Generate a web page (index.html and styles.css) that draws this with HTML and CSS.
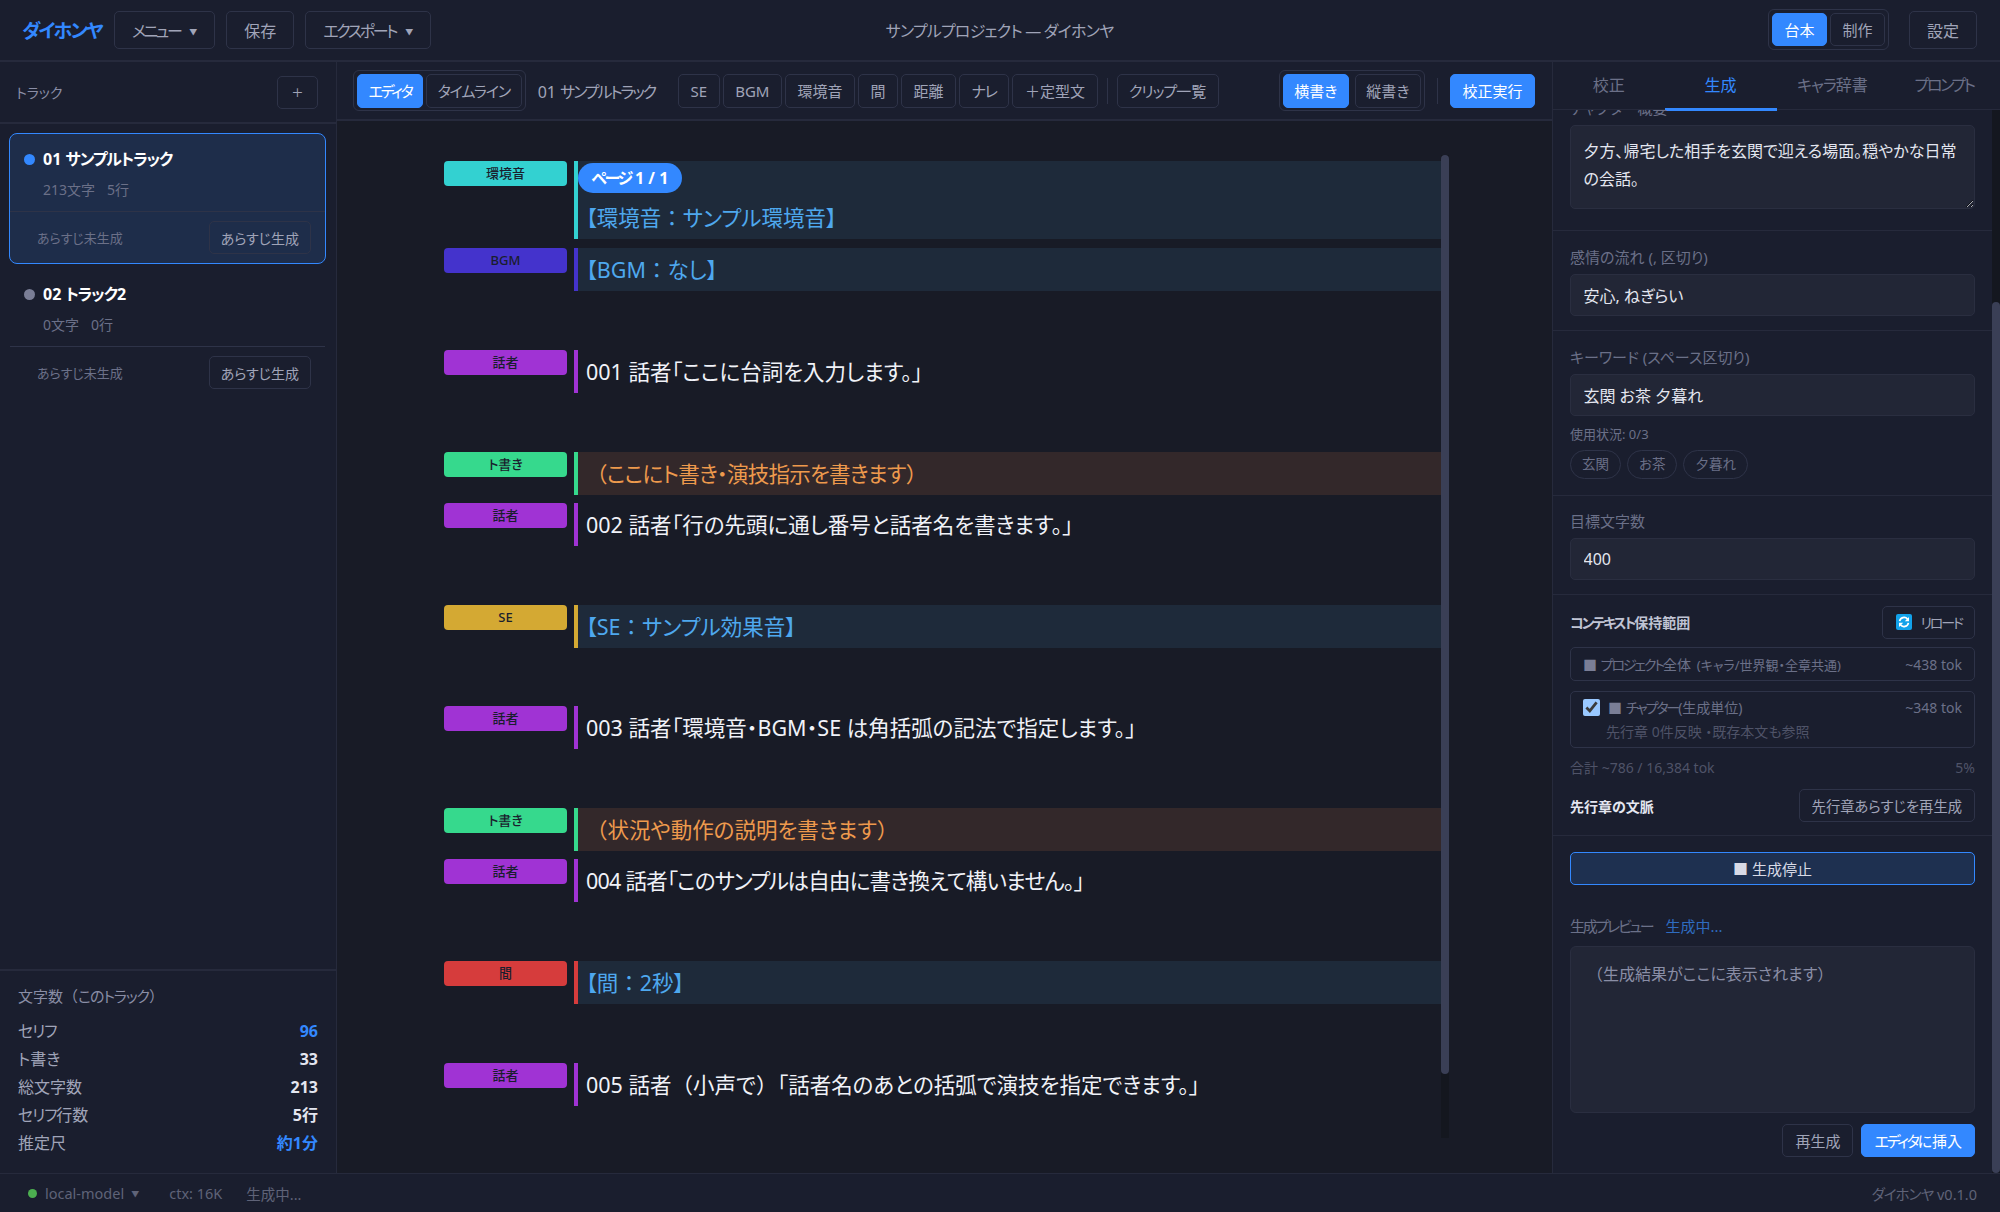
FILE: index.html
```html
<!DOCTYPE html>
<html lang="ja">
<head>
    <meta charset="UTF-8">
    <title>サンプルプロジェクト — ダイホンヤ</title>
    <link rel="stylesheet" href="styles.css">
</head>
<body>
    <div class="app">
        <header class="topbar">
            <div class="topbar-left">
                <span class="logo">ダイホンヤ</span>
                <button class="btn btn-top"><span class="kn">メニュー</span><span class="caret">▼</span></button>
                <button class="btn btn-top">保存</button>
                <button class="btn btn-top"><span class="kn">エクスポート</span><span class="caret">▼</span></button>
            </div>
            <div class="topbar-title">サンプルプロジェクト — ダイホンヤ</div>
            <div class="topbar-right">
                <div class="seg seg-top">
                    <button class="seg-btn active">台本</button>
                    <button class="seg-btn">制作</button>
                </div>
                <button class="btn btn-top">設定</button>
            </div>
        </header>

        <div class="main">
            <!-- トラック一覧 -->
            <aside class="sidebar">
                <div class="side-head">
                    <span>トラック</span>
                    <button class="btn btn-add">+</button>
                </div>
                <div class="tracks">
                    <div class="track selected">
                        <div class="track-title"><span class="dot dot-blue"></span><span>01 <span class="kn-s">サンプルトラック</span></span></div>
                        <div class="track-sub"><span>213文字</span><span>5行</span></div>
                        <div class="track-foot">
                            <span>あらすじ未生成</span>
                            <button class="btn btn-small">あらすじ生成</button>
                        </div>
                    </div>
                    <div class="track">
                        <div class="track-title"><span class="dot dot-gray"></span><span>02 <span class="kn-s">トラック</span>2</span></div>
                        <div class="track-sub"><span>0文字</span><span>0行</span></div>
                        <div class="track-foot">
                            <span>あらすじ未生成</span>
                            <button class="btn btn-small">あらすじ生成</button>
                        </div>
                    </div>
                </div>
                <div class="stats">
                    <div class="stats-title">文字数<span class="zen">（</span><span class="kn-s">このトラック</span><span class="zen">）</span></div>
                    <div class="stat"><span class="kn-s">セリフ</span><b class="blue">96</b></div>
                    <div class="stat"><span>ト書き</span><b>33</b></div>
                    <div class="stat"><span>総文字数</span><b>213</b></div>
                    <div class="stat"><span><span class="kn-s">セリフ</span>行数</span><b>5行</b></div>
                    <div class="stat"><span>推定尺</span><b class="blue">約1分</b></div>
                </div>
            </aside>

            <!-- エディタ -->
            <section class="center">
                <div class="toolbar">
                    <div class="seg">
                        <button class="seg-btn active"><span class="kn">エディタ</span></button>
                        <button class="seg-btn"><span class="kn-s">タイムライン</span></button>
                    </div>
                    <span class="track-name">01 <span class="kn-m">サンプルトラック</span></span>
                    <div class="tool-group">
                        <button class="btn btn-tool">SE</button>
                        <button class="btn btn-tool">BGM</button>
                        <button class="btn btn-tool">環境音</button>
                        <button class="btn btn-tool">間</button>
                        <button class="btn btn-tool">距離</button>
                        <button class="btn btn-tool"><span class="kn-s">ナレ</span></button>
                        <button class="btn btn-tool"><span class="zen">＋</span>定型文</button>
                    </div>
                    <span class="sep"></span>
                    <button class="btn btn-tool"><span class="kn-s">クリップ</span>一覧</button>
                    <div class="spacer"></div>
                    <div class="seg seg-wide">
                        <button class="seg-btn active">横書き</button>
                        <button class="seg-btn">縦書き</button>
                    </div>
                    <span class="sep sep-wide"></span>
                    <button class="btn btn-tool btn-primary">校正実行</button>
                </div>

                <div class="editor">
                    <div class="sheet">
                        <div class="rows">
                            <div class="row row-first">
                                <span class="tag tag-ambient">環境音</span>
                                <div class="line line-cue bar-ambient">
                                    <span class="page-badge"><span class="kn">ページ</span> 1 / 1</span>
                                    <span>【環境音<span class="zen">：</span>サンプル環境音】</span>
                                </div>
                            </div>
                            <div class="row">
                                <span class="tag tag-bgm">BGM</span>
                                <div class="line line-cue bar-bgm"><span>【BGM<span class="zen">：</span>なし】</span></div>
                            </div>
                            <div class="row"></div>
                            <div class="row">
                                <span class="tag tag-speaker">話者</span>
                                <div class="line bar-speaker">001 話者「ここに台詞を入力します。」</div>
                            </div>
                            <div class="row"></div>
                            <div class="row">
                                <span class="tag tag-note">ト書き</span>
                                <div class="line line-note bar-note"><span class="tight"><span class="zen">（</span>ここにト書き・演技指示を書きます<span class="zen">）</span></span></div>
                            </div>
                            <div class="row">
                                <span class="tag tag-speaker">話者</span>
                                <div class="line bar-speaker">002 話者「行の先頭に通し番号と話者名を書きます。」</div>
                            </div>
                            <div class="row"></div>
                            <div class="row">
                                <span class="tag tag-se">SE</span>
                                <div class="line line-cue bar-se"><span>【SE<span class="zen">：</span>サンプル効果音】</span></div>
                            </div>
                            <div class="row"></div>
                            <div class="row">
                                <span class="tag tag-speaker">話者</span>
                                <div class="line bar-speaker">003 話者「環境音・BGM・SE は角括弧の記法で指定します。」</div>
                            </div>
                            <div class="row"></div>
                            <div class="row">
                                <span class="tag tag-note">ト書き</span>
                                <div class="line line-note bar-note"><span><span class="zen">（</span>状況や動作の説明を書きます<span class="zen">）</span></span></div>
                            </div>
                            <div class="row">
                                <span class="tag tag-speaker">話者</span>
                                <div class="line bar-speaker"><span class="tight">004 話者「この<span class="kn-s">サンプル</span>は自由に書き換えて構いません。」</span></div>
                            </div>
                            <div class="row"></div>
                            <div class="row">
                                <span class="tag tag-pause">間</span>
                                <div class="line line-cue bar-pause"><span>【間<span class="zen">：</span>2秒】</span></div>
                            </div>
                            <div class="row"></div>
                            <div class="row">
                                <span class="tag tag-speaker">話者</span>
                                <div class="line bar-speaker"><span>005 話者<span class="zen">（</span>小声で<span class="zen">）</span>「話者名のあとの括弧で演技を指定できます。」</span></div>
                            </div>
                        </div>
                        <div class="vbar vbar-editor"><div class="vbar-thumb"></div></div>
                    </div>
                </div>
            </section>

            <!-- 右パネル -->
            <aside class="panel">
                <nav class="tabs">
                    <span class="tab">校正</span>
                    <span class="tab active">生成</span>
                    <span class="tab"><span class="kn-s">キャラ</span>辞書</span>
                    <span class="tab"><span class="kn">プロンプト</span></span>
                </nav>
                <div class="panel-body">
                    <div class="panel-scroll">
                        <div class="section section-first">
                            <label class="field-label">チャプター概要</label>
                            <textarea class="field field-area" rows="2">夕方、帰宅した相手を玄関で迎える場面。穏やかな日常の会話。</textarea>
                        </div>
                        <div class="section section-emotion">
                            <label class="field-label">感情の流れ (, 区切り)</label>
                            <input class="field" type="text" value="安心, ねぎらい">
                        </div>
                        <div class="section section-keywords">
                            <label class="field-label">キーワード (スペース区切り)</label>
                            <input class="field" type="text" value="玄関 お茶 夕暮れ">
                            <div class="usage">使用状況: 0/3</div>
                            <div class="chips">
                                <span class="chip">玄関</span>
                                <span class="chip">お茶</span>
                                <span class="chip">夕暮れ</span>
                            </div>
                        </div>
                        <div class="section section-target">
                            <label class="field-label">目標文字数</label>
                            <input class="field" type="text" value="400">
                        </div>
                        <div class="section section-context">
                            <div class="context-head">
                                <span class="bold-label"><span class="kn">コンテキスト</span>保持範囲</span>
                                <button class="btn btn-reload">
                                    <svg class="reload-icon" width="16" height="16" viewBox="0 0 16 16">
                                        <rect width="16" height="16" rx="2" fill="#12a2ea"/>
                                        <path d="M3.6 7.2A4.5 4.5 0 0 1 11.6 5.2" fill="none" stroke="#fff" stroke-width="1.7"/>
                                        <path d="M13 3v4.2H8.8z" fill="#fff"/>
                                        <path d="M12.4 8.8A4.5 4.5 0 0 1 4.4 10.8" fill="none" stroke="#fff" stroke-width="1.7"/>
                                        <path d="M3 13V8.8h4.2z" fill="#fff"/>
                                    </svg>
                                    <span class="kn">リロード</span>
                                </button>
                            </div>
                            <div class="ctx-box">
                                <span class="ctx-name"><i class="square">■</i> <span class="kn">プロジェクト</span>全体 <small>(キャラ/世界観・全章共通)</small></span>
                                <span class="ctx-tok">~438 tok</span>
                            </div>
                            <div class="ctx-box ctx-box-check">
                                <input class="ctx-check" type="checkbox" checked>
                                <div class="ctx-main">
                                    <div class="ctx-row">
                                        <span class="ctx-name"><i class="square">■</i> <span class="kn">チャプター</span>(生成単位)</span>
                                        <span class="ctx-tok">~348 tok</span>
                                    </div>
                                    <div class="ctx-note">先行章 0件反映 ・既存本文も参照</div>
                                </div>
                            </div>
                            <div class="ctx-total">
                                <span>合計 ~786 / 16,384 tok</span>
                                <span>5%</span>
                            </div>
                            <div class="context-head context-prev">
                                <span class="bold-label bright">先行章の文脈</span>
                                <button class="btn btn-small">先行章あらすじを再生成</button>
                            </div>
                        </div>
                        <div class="section section-generate">
                            <button class="btn-stop">■ 生成停止</button>
                            <div class="preview-label"><span class="kn">生成プレビュー</span><span class="generating">生成中...</span></div>
                            <div class="preview"><span class="zen">（</span>生成結果がここに表示されます<span class="zen">）</span></div>
                            <div class="preview-actions">
                                <button class="btn btn-action">再生成</button>
                                <button class="btn btn-action btn-primary"><span class="kn">エディタ</span>に挿入</button>
                            </div>
                        </div>
                    </div>
                    <div class="vbar vbar-panel"><div class="vbar-thumb"></div></div>
                </div>
            </aside>
        </div>

        <footer class="statusbar">
            <div class="status-left">
                <span class="status-model"><span class="dot dot-green"></span>local-model<span class="caret">▼</span></span>
                <span>ctx: 16K</span>
                <span>生成中...</span>
            </div>
            <span><span class="kn-s">ダイホンヤ</span> v0.1.0</span>
        </footer>
    </div>
</body>
</html>
```

FILE: styles.css
```css
* {
    box-sizing: border-box;
}

html, body {
    margin: 0;
    height: 100%;
    overflow: hidden;
}

body {
    background-color: #1a1e2e;
    color: #e4e6f0;
    font-family: "Noto Sans", "Noto Sans CJK JP", sans-serif;
    font-feature-settings: "palt";
    font-size: 14px;
}

button, input, textarea {
    font: inherit;
    font-feature-settings: inherit;
}

/* カタカナの詰め */
.kn {
    letter-spacing: -0.15em;
}

.kn-m {
    letter-spacing: -0.13em;
}

.kn-s {
    letter-spacing: -0.07em;
}

.tight {
    letter-spacing: -0.035em;
}

/* 全角のまま見せる記号 */
.zen {
    font-feature-settings: normal;
}

.app {
    display: flex;
    flex-direction: column;
    height: 1212px;
}

/* 共通ボタン */
.btn {
    background-color: transparent;
    border: 1.5px solid #2e3348;
    border-radius: 5px;
    color: #a0a4b8;
    cursor: pointer;
    padding: 0;
}

.btn-primary {
    background-color: #3388ff;
    border-color: #3388ff;
    color: #fff;
}

.caret {
    font-size: 8px;
    margin-left: 9px;
    vertical-align: 2px;
}

/* 上部バー */
.topbar {
    display: grid;
    grid-template-columns: 1fr auto 1fr;
    align-items: center;
    height: 62px;
    flex-shrink: 0;
    padding: 0 23px 1px 22px;
    border-bottom: 2px solid #262a3c;
}

.topbar-left {
    display: flex;
    align-items: center;
    gap: 11px;
}

.logo {
    color: #3388ff;
    font-size: 19px;
    font-weight: 700;
    letter-spacing: -2px;
    margin-right: 1px;
}

.btn-top {
    height: 38px;
    padding: 0 17px;
    font-size: 16px;
}

.topbar-title {
    color: #a0a4b8;
    font-size: 16px;
    letter-spacing: -0.05em;
}

.topbar-right {
    display: flex;
    align-items: center;
    justify-content: flex-end;
    gap: 20px;
}

.seg {
    display: flex;
    gap: 3px;
    padding: 2.5px 3px;
    border: 1.5px solid #2e3348;
    border-radius: 6px;
}

.seg-wide {
    gap: 6px;
}

.seg-btn {
    height: 34px;
    padding: 0 10.5px;
    background-color: transparent;
    border: 1.5px solid #2e3348;
    border-radius: 5px;
    color: #a0a4b8;
    font-size: 15px;
}

.seg-btn.active {
    background-color: #3388ff;
    border-color: #3388ff;
    color: #fff;
}

.seg-top {
    padding: 3px;
}

.seg-top .seg-btn {
    height: 33px;
    padding: 0 11.5px;
    font-size: 15px;
}

.main {
    display: flex;
    flex: 1;
    min-height: 0;
}

/* 左サイドバー */
.sidebar {
    display: flex;
    flex-direction: column;
    width: 337px;
    flex-shrink: 0;
    border-right: 1.5px solid #262a3c;
}

.side-head {
    display: flex;
    align-items: center;
    justify-content: space-between;
    height: 62px;
    padding: 0 18px 0 16px;
    border-bottom: 2px solid #262a3c;
    color: #8a8ea6;
    font-size: 14px;
}

.btn-add {
    width: 41px;
    height: 33px;
    font-size: 19px;
    font-weight: 300;
}

.tracks {
    flex: 1;
    padding: 9px 10px 0 9px;
}

.track {
    border: 1.5px solid transparent;
    border-radius: 8px;
    margin-bottom: 4px;
}

.track.selected {
    background-color: #1e2d4a;
    border-color: #3388ff;
}

.track-title {
    display: flex;
    align-items: center;
    gap: 8px;
    padding: 13px 0 0 14px;
    color: #fff;
    font-size: 16px;
    font-weight: 700;
    line-height: 24px;
}

.dot {
    display: inline-block;
    width: 11px;
    height: 11px;
    border-radius: 50%;
}

.dot-blue {
    background-color: #3388ff;
}

.dot-gray {
    background-color: #7a7e96;
}

.dot-green {
    width: 9px;
    height: 9px;
    background-color: #4caf50;
    margin-right: 8px;
}

.track-sub {
    display: flex;
    gap: 12px;
    padding: 8px 0 0 33px;
    color: #6b7088;
    font-size: 14px;
    line-height: 22px;
}

.track-foot {
    display: flex;
    align-items: center;
    justify-content: space-between;
    height: 52px;
    margin-top: 10px;
    padding: 0 14px 0 27px;
    border-top: 1.5px solid #2e3348;
    color: #6b7088;
    font-size: 13px;
}

.btn-small {
    height: 33px;
    padding: 0 11px;
    font-size: 14px;
}

.btn-action {
    height: 33px;
    padding: 0 12px;
    font-size: 15px;
}

.stats {
    height: 204px;
    padding: 14px 18px 0;
    border-top: 2px solid #262a3c;
    color: #a0a4b8;
}

.stats-title {
    color: #8a8ea6;
    font-size: 15px;
    line-height: 22px;
    margin-bottom: 10px;
}

.stat {
    display: flex;
    justify-content: space-between;
    font-size: 16px;
    line-height: 28px;
}

.stat b {
    color: #e4e6f0;
    font-weight: 700;
}

.stat b.blue {
    color: #3388ff;
}

/* 中央エディタ */
.center {
    display: flex;
    flex-direction: column;
    flex: 1;
    min-width: 0;
    background-color: #181b26;
}

.toolbar {
    display: flex;
    align-items: center;
    height: 59px;
    flex-shrink: 0;
    padding: 0 17px 0 16px;
    background-color: #1a1e2e;
    border-bottom: 2px solid #262a3c;
}

.track-name {
    margin: 0 23px 0 12px;
    color: #a0a4b8;
    font-size: 16px;
}

.tool-group {
    display: flex;
    gap: 3px;
}

.btn-tool {
    height: 34px;
    padding: 0 11.5px;
    font-size: 15px;
}

.sep {
    width: 1px;
    height: 26px;
    margin: 0 9px;
    background-color: #2e3348;
}

.sep-wide {
    margin: 0 12px;
}

.spacer {
    flex: 1;
}

.editor {
    flex: 1;
    padding: 34px 103px 0 107px;
    min-height: 0;
}

.sheet {
    display: flex;
    height: 983px;
}

.rows {
    flex: 1;
    min-width: 0;
    padding-top: 6px;
}

.row {
    display: flex;
    height: 42.94px;
    margin-bottom: 8px;
}

.row-first {
    height: 78px;
    margin-bottom: 9px;
}

.tag {
    width: 123px;
    height: 25px;
    flex-shrink: 0;
    margin-right: 7px;
    border-radius: 4px;
    color: #1a1e2e;
    font-size: 13px;
    font-weight: 500;
    line-height: 25px;
    text-align: center;
}

.tag-ambient { background-color: #33d1d1; }
.tag-bgm { background-color: #4433cc; }
.tag-speaker { background-color: #a033d4; }
.tag-note { background-color: #36d98d; }
.tag-se { background-color: #d4a933; }
.tag-pause { background-color: #d63c3c; }

.line {
    position: relative;
    display: flex;
    align-items: flex-end;
    flex: 1;
    padding: 0 0 5px 8px;
    border-left: 4px solid transparent;
    color: #f0f2f8;
    font-size: 21.5px;
    line-height: 32px;
}

.line-cue {
    background-color: #1e2a3a;
    color: #4ea8ee;
}

.line-note {
    background-color: #33282a;
    color: #ee9a4d;
}

.bar-ambient { border-left-color: #33d1d1; }
.bar-bgm { border-left-color: #4433cc; }
.bar-speaker { border-left-color: #a033d4; }
.bar-note { border-left-color: #36d98d; }
.bar-se { border-left-color: #d4a933; }
.bar-pause { border-left-color: #d63c3c; }

.page-badge {
    position: absolute;
    top: 2px;
    left: 0;
    height: 30px;
    padding: 0 13.5px;
    border-radius: 15px;
    background-color: #3388ff;
    color: #fff;
    font-size: 16px;
    font-weight: 700;
    line-height: 30px;
}

.vbar {
    flex-shrink: 0;
    display: flex;
    flex-direction: column;
    width: 8px;
    background-color: #14171f;
}

.vbar-thumb {
    flex: 1;
    background-color: #3a3f56;
    border-radius: 4px;
}

.vbar-editor .vbar-thumb {
    margin-bottom: 64px;
}

.vbar-panel .vbar-thumb {
    margin-top: 192px;
}

/* 右パネル */
.panel {
    display: flex;
    flex-direction: column;
    width: 448px;
    flex-shrink: 0;
    border-left: 1.5px solid #262a3c;
}

.tabs {
    display: flex;
    height: 48px;
    flex-shrink: 0;
    border-bottom: 1.5px solid #262a3c;
}

.tab {
    flex: 1;
    padding-top: 11px;
    color: #6b7088;
    font-size: 16px;
    line-height: 24px;
    text-align: center;
}

.tab.active {
    color: #3388ff;
    border-bottom: 3px solid #3388ff;
    margin-bottom: -1.5px;
}

.panel-body {
    display: flex;
    flex: 1;
    min-height: 0;
}

.panel-scroll {
    flex: 1;
    min-width: 0;
    overflow: hidden;
}

.section {
    padding: 16px 17px 14.5px 17px;
    border-bottom: 1.5px solid #262a3c;
}

.section-first {
    margin-top: -28px;
    padding-bottom: 21px;
}

.section-emotion {
    padding-bottom: 13.5px;
}

.section-keywords {
    padding-bottom: 16px;
}

.section-target {
    padding-top: 15px;
    padding-bottom: 14px;
}

.field-label {
    display: block;
    margin-bottom: 6px;
    color: #6b7088;
    font-size: 15px;
    line-height: 21px;
}

.field {
    display: block;
    width: 100%;
    height: 42px;
    padding: 0 12.5px;
    background-color: #222636;
    border: 1px solid #2a2e40;
    border-radius: 5px;
    color: #e4e6f0;
    font-size: 16px;
    outline: none;
}

.field-area {
    height: 84px;
    padding: 11px 12.5px;
    line-height: 28px;
    resize: vertical;
    color-scheme: dark;
}

.usage {
    margin-top: 8px;
    color: #6b7088;
    font-size: 13px;
    line-height: 20px;
}

.chips {
    display: flex;
    gap: 6px;
    margin-top: 6px;
}

.chip {
    height: 29px;
    padding: 0 11px;
    border: 1.5px solid #2e3348;
    border-radius: 15px;
    color: #6b7088;
    font-size: 13.5px;
    line-height: 26px;
}

.section-context {
    padding-top: 11px;
    padding-bottom: 13px;
}

.context-head {
    display: flex;
    align-items: center;
    justify-content: space-between;
}

.bold-label {
    color: #c0c4d4;
    font-size: 14px;
    font-weight: 700;
}

.bold-label.bright {
    color: #e4e6f0;
}

.btn-reload {
    display: flex;
    align-items: center;
    gap: 8px;
    height: 33px;
    padding: 0 12px 0 13px;
    font-size: 14px;
}

.reload-icon {
    flex-shrink: 0;
}

.ctx-box {
    display: flex;
    justify-content: space-between;
    align-items: center;
    height: 34px;
    margin-top: 8.5px;
    padding: 0 12px;
    border: 1.5px solid #2e3348;
    border-radius: 5px;
    color: #6b7088;
    font-size: 14px;
}

.ctx-box-check {
    align-items: flex-start;
    justify-content: flex-start;
    height: 57px;
    margin-top: 10px;
    padding-top: 6px;
}

.ctx-check {
    width: 17px;
    height: 17px;
    flex-shrink: 0;
    margin: 1px 8px 0 0;
    color-scheme: dark;
}

.ctx-main {
    flex: 1;
}

.ctx-row {
    display: flex;
    justify-content: space-between;
    line-height: 20px;
}

.ctx-note {
    margin: 4px 0 0 -2px;
    font-size: 14px;
    line-height: 20px;
    color: #4f5368;
}

.square {
    color: #7a7e96;
    font-style: normal;
}

.ctx-name small {
    font-size: 13px;
    margin-left: 2px;
}

.ctx-tok {
    font-size: 14px;
}

.ctx-total {
    display: flex;
    justify-content: space-between;
    margin-top: 10px;
    color: #4f5368;
    font-size: 14px;
    line-height: 20px;
}

.context-prev {
    margin-top: 11px;
}

.context-prev .btn-small {
    padding: 0 12px;
    font-size: 14.3px;
}

.section-generate {
    padding-top: 16px;
    border-bottom: 0;
}

.btn-stop {
    display: block;
    width: 100%;
    height: 33px;
    padding: 0;
    background-color: #1e3050;
    border: 1.5px solid #3388ff;
    border-radius: 5px;
    color: #d8dae6;
    font-size: 15px;
}

.preview-label {
    margin-top: 30.5px;
    color: #6b7088;
    font-size: 15px;
    line-height: 21px;
}

.generating {
    margin-left: 13px;
    color: #2f6cc0;
    letter-spacing: 0;
}

.preview {
    height: 167px;
    margin-top: 9.5px;
    padding: 13px 16px;
    background-color: #222636;
    border: 1px solid #2a2e40;
    border-radius: 6px;
    color: #8a8ea6;
    font-size: 16px;
    line-height: 28px;
}

.preview-actions {
    display: flex;
    justify-content: flex-end;
    gap: 8px;
    margin-top: 11px;
}

/* ステータスバー */
.statusbar {
    display: flex;
    align-items: center;
    justify-content: space-between;
    height: 39px;
    flex-shrink: 0;
    padding: 0 23px 0 28px;
    border-top: 1.5px solid #262a3c;
    color: #5f6378;
    font-size: 14.5px;
}

.status-left {
    display: flex;
    gap: 24px;
}

.status-model {
    display: flex;
    align-items: center;
    margin-right: 6px;
}

.status-model .caret {
    margin-left: 7px;
}
```
